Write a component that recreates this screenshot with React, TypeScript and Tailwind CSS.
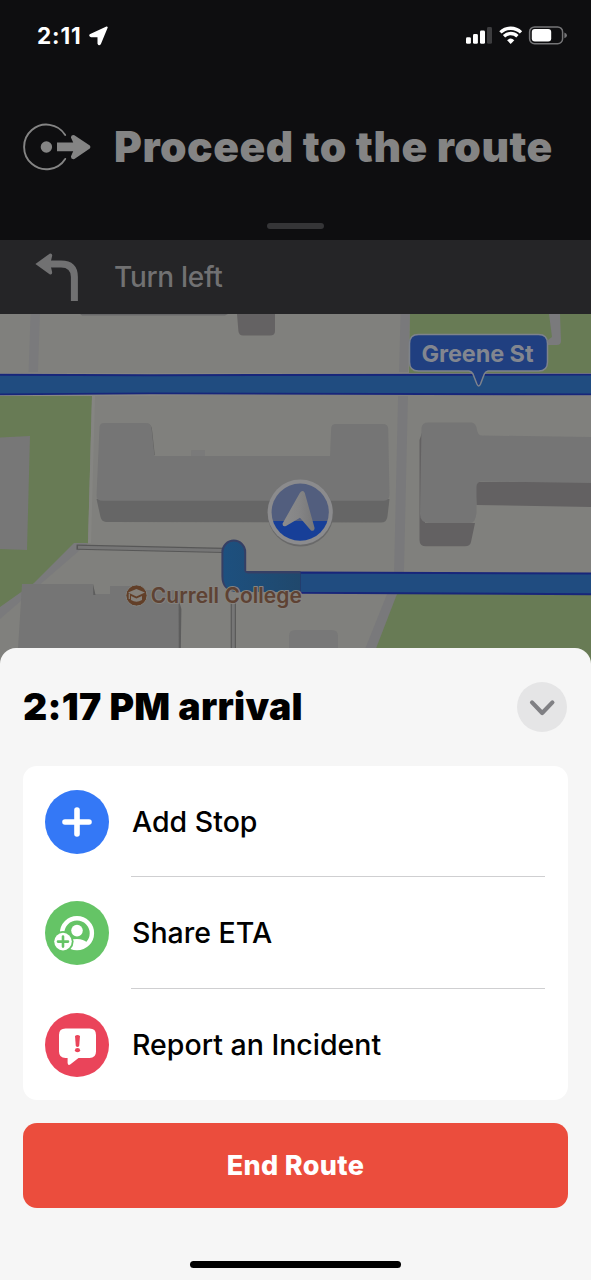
import type { ReactNode } from "react";

function StatusBar() {
  return (
    <div className="flex h-[72px] items-center justify-between pl-[37px] pr-[23px]">
      <div className="flex items-center gap-[6px]">
        <span className="w-[46px] whitespace-nowrap text-[22.5px] font-bold leading-none tracking-[0.9px] text-white">2:11</span>
        <svg width="19" height="20" viewBox="0 0 19 20" fill="#fff" stroke="#fff" strokeWidth="1.8" strokeLinejoin="round">
          <path d="M17.8 1.4 L11 17.8 Q10 19.2 9.4 17.4 V10.4 H2.4 Q0.4 9.8 1.6 8.7Z" />
        </svg>
      </div>
      <svg width="102" height="20" viewBox="0 0 102 20">
        <rect x="0" y="11.2" width="4.9" height="6.6" rx="1.4" fill="#fff" />
        <rect x="7" y="8" width="4.9" height="9.8" rx="1.4" fill="#fff" />
        <rect x="14" y="4.6" width="5" height="13.2" rx="1.4" fill="#fff" />
        <rect x="21" y="1" width="5" height="16.8" rx="1.4" fill="#3d3d3f" />
        <g fill="none" stroke="#fff" strokeWidth="3.3">
          <path d="M34.4 6.4 A14.8 14.8 0 0 1 55 6.4" />
          <path d="M38 10.2 A9.6 9.6 0 0 1 51.4 10.2" />
        </g>
        <path d="M41.1 14.2 A5.4 5.4 0 0 1 48.3 14.2 L44.7 18Z" fill="#fff" />
        <rect x="63.6" y="0.9" width="33" height="16.8" rx="5" fill="none" stroke="#757577" strokeWidth="1.5" />
        <rect x="65.8" y="3" width="19.4" height="12.6" rx="3" fill="#fff" />
        <path d="M98.4 6.4 Q101 7.2 101 9.3 Q101 11.4 98.4 12.2Z" fill="#757577" />
      </svg>
    </div>
  );
}

function ProceedIcon() {
  return (
    <svg width="70" height="50" viewBox="22 122 70 50" className="shrink-0">
      <path d="M65.2 134.9 A22.3 22.3 0 1 0 65.2 158.9" fill="none" stroke="#848484" strokeWidth="1.9" strokeLinecap="round" />
      <circle cx="46.4" cy="147" r="5.7" fill="#848484" />
      <path d="M57 142.6 H73.2 L70.9 137.6 Q71 134.2 74.4 135.2 L89.8 145.6 Q91.2 147 89.8 148.4 L74.4 159 Q71 159.8 70.9 156.6 L73.2 151.3 H57Z" fill="#848484" />
    </svg>
  );
}

function TurnLeftIcon() {
  return (
    <svg width="46" height="50" viewBox="34 252 46 50" className="shrink-0">
      <path d="M48 263.9 H61 Q74.4 263.9 74.4 277 V301" fill="none" stroke="#717172" strokeWidth="7" />
      <path d="M35.4 264.1 L50 253.4 Q52.4 253.2 52.2 255.8 L50.2 263.9 L52.2 272.2 Q52.2 275 49.6 274.2Z" fill="#717172" />
    </svg>
  );
}

function RouteMap() {
  return (
    <svg className="block h-[350px] w-full" viewBox="0 314 591 350" fontFamily="Inter, sans-serif">
      <defs>
        <linearGradient id="past" x1="0" x2="1" y1="0" y2="0">
          <stop offset="0" stopColor="#1d507f" />
          <stop offset="1" stopColor="#20486c" />
        </linearGradient>
        <linearGradient id="needle" x1="0" x2="1" y1="0" y2="0">
          <stop offset="0" stopColor="#8c8c8c" />
          <stop offset="0.5" stopColor="#858586" />
          <stop offset="1" stopColor="#777778" />
        </linearGradient>
        <clipPath id="puck">
          <circle cx="300.2" cy="512.2" r="28.6" />
        </clipPath>
      </defs>
      <rect x="0" y="314" width="591" height="350" fill="#80807d" />

      {/* side streets */}
      <path d="M30.5 314 H40 L38 372 H28.5Z" fill="#7a7a7c" />
      <path d="M80 314 H228 L225 315.4 H82Z" fill="#69696a" />
      <path d="M400.5 314 H410 L408 372 H399Z" fill="#79797b" />
      <path d="M398 396 H408 L404 572 H394Z" fill="#79797b" />
      <path d="M387 594 H397 L375 664 H359Z" fill="#79797b" />

      {/* parks */}
      <path d="M410 314 H591 V373 H409Z" fill="#687b55" />
      <path d="M549 314 H560 L561 341 Q561 345 557 345 H548 V340 L552 337Z" fill="#7a7a7c" />
      <path d="M397 594 H591 V664 H370Z" fill="#687b55" />
      <path d="M0 396 H92 L88 543 L34 584 L0 608Z" fill="#687b55" />
      <path d="M92 396 H95 L91 543 H88Z" fill="#858582" />
      <path d="M0 437.5 L30 436 L27 550 L0 549Z" fill="#777777" />
      <path d="M74 543 H88 L80 550 L0 619 V607 L34 583Z" fill="#7a7a7c" />

      {/* buildings */}
      <path d="M237 314 H275 V331 Q275 335.5 270 335.5 H243 Q239 335.5 238.4 331Z" fill="#646263" />
      <path d="M148 424 Q152 425 152.2 431 L154.8 455 L151 456Z" fill="#616161" />
      <path d="M96.5 499 H389.5 L387.4 517 Q386.5 522.5 381 522.5 L106 522 Q101.5 521.5 100.5 517Z" fill="#666666" />
      <path d="M99.5 427 Q100 423 104 423 H146 Q151 423 151.5 428 L154.5 456 H191.5 V450.5 H205 V456 H330 L331.2 428 Q331.4 424 336 424 H383 Q388 424 388.2 429 L389.5 494 Q389.5 500.7 384 500.7 H103 Q96.5 500.7 96.5 496Z" fill="#757575" />
      <rect x="191.5" y="450.5" width="13.5" height="5.5" fill="#7a7a7a" />
      <path d="M419.5 440 L425 424 V523 H475 L471 542 Q470 546.3 465 546.3 H426 Q419.5 546.3 419.5 540Z" fill="#636162" />
      <path d="M475 482 H591 V507 L476.5 505Z" fill="#636162" />
      <path d="M421.5 428 Q422 422.5 428 422.5 H472 Q476 423 477 430 Q478 435.5 482 435.5 L591 437 V483 L482 481.5 Q476.5 481.5 476.5 487 V513 Q475.5 523 470 523 H430 Q420 523 420 514Z" fill="#757575" />
      <path d="M22 584 H93 L95 594 H110 V586 L130 586 V590 H180 L181 664 H17Z" fill="#757575" />
      <path d="M93 584 L95.5 595 H93.3Z M178.6 600 L181.4 609 L180.6 664 H178.8Z" fill="#5d5d5d" />
      <path d="M289 664 V636 Q289 630 295 630 H332 Q338 630 338 636 V664Z" fill="#787878" />

      {/* footpaths */}
      <path d="M76.5 547.2 L224 550.4 M233.3 603 V664" fill="none" stroke="#575757" strokeWidth="5.2" />
      <path d="M78 547.2 L224 550.4 M233.3 603 V664" fill="none" stroke="#767676" strokeWidth="3" />

      {/* route */}
      <path d="M-4 373.3 L150 373.6 L595 373.2 V395.8 L300 394 L150 395.4 L-4 396Z" fill="#8b8b86" />
      <path d="M-4 374.8 L150 375.2 L595 374.6 V394.4 L150 393.4 L-4 394.4Z" fill="#204c80" stroke="#18267a" strokeWidth="1.9" />
      <path d="M300 572.6 L595 573.6 V594.2 L300 592.8Z" fill="#204c80" stroke="#18267a" strokeWidth="2" />
      <path d="M221.4 552 A12.4 12.4 0 0 1 246.2 552 V571 H300.5 V592 H238 Q221.4 592 221.4 576Z" fill="#353f65" />
      <path d="M223.4 552 A10.4 10.4 0 0 1 244.2 552 V569 Q244.2 573.4 248 573.4 H300.5 V592 H240 Q223.4 592 223.4 576Z" fill="url(#past)" />

      {/* position puck */}
      <circle cx="300.5" cy="513.4" r="33" fill="#696969" />
      <circle cx="300.2" cy="512.2" r="32.6" fill="#8b8b8d" />
      <g clipPath="url(#puck)">
        <rect x="270" y="480" width="62" height="41" fill="#525e7e" />
        <rect x="270" y="521" width="62" height="24" fill="#173f98" />
      </g>
      <path d="M302.6 491 Q304 491.2 304.8 493 L314.6 528 Q314.4 531.6 311 530.6 L300 517.8 L286 526 Q282.2 527.2 282.6 523.4 L299.8 493 Q301 491 302.6 491Z" fill="url(#needle)" />

      {/* street callout */}
      <path d="M418.5 334.5 H538.5 Q547.5 334.5 547.5 343.5 V362 Q547.5 371 538.5 371 H488 Q485.5 371.5 484.3 374 L480.5 384 Q478.7 388 476.9 384 L473 374 Q471.5 371.5 469 371 H418.5 Q409.5 371 409.5 362 V343.5 Q409.5 334.5 418.5 334.5Z" fill="#203f80" stroke="#7e838c" strokeWidth="1.5" />
      <text x="421.5" y="361.8" fontSize="23.5" fontWeight="700" fill="#82868f" textLength="112">Greene St</text>

      {/* place label */}
      <circle cx="136.5" cy="595.5" r="10.6" fill="#623f28" stroke="#80807d" strokeWidth="1" />
      <path d="M128 592.6 L136.4 589 L145 592.6 L136.4 596.4Z M131 596 L136.4 598.4 L142 596 V600 Q136.4 603.6 131 600Z" fill="#85817b" />
      <path d="M129.3 593.5 V599" stroke="#85817b" strokeWidth="1.2" />
      <text x="150.8" y="603" fontSize="21" fontWeight="600" fill="#5e4233" stroke="#85837f" strokeWidth="2" paintOrder="stroke" strokeLinejoin="round" textLength="151">Currell College</text>
    </svg>
  );
}

function AddIcon() {
  return (
    <path d="M32 20 V44 M20 32 H44" stroke="#fff" strokeWidth="5.6" strokeLinecap="round" />
  );
}

function ShareIcon() {
  return (
    <>
      <circle cx="32" cy="32.2" r="14.9" fill="none" stroke="#fff" strokeWidth="4.4" />
      <circle cx="32" cy="29.6" r="5.8" fill="#fff" />
      <path d="M20 43 Q23 38 32 38 Q38.6 38 42 41.5 Q39 48.5 31 48.5Z" fill="#fff" />
      <circle cx="18" cy="40.6" r="10.6" fill="#65c466" />
      <circle cx="18" cy="40.6" r="8.8" fill="#fff" />
      <path d="M18 35.6 V45.6 M13 40.6 H23" stroke="#65c466" strokeWidth="2.6" strokeLinecap="round" />
    </>
  );
}

function IncidentIcon() {
  return (
    <>
      <path d="M20.5 15.6 H44.5 Q51 15.6 51 22 V38.5 Q51 45 44.5 45 H33.5 L25.5 51.3 Q23 53 22.6 50 V45 H20.5 Q14 45 14 38.5 V22 Q14 15.6 20.5 15.6Z" fill="#fff" />
      <path d="M30 23 Q32.5 20.8 35 23 L34.2 33 Q32.5 34.8 30.8 33Z" fill="#ea445a" />
      <ellipse cx="32.5" cy="37.2" rx="2.6" ry="2.1" fill="#ea445a" />
    </>
  );
}

function ActionRow({ tone, label, height, divider, children }: { tone: string; label: string; height: string; divider: boolean; children: ReactNode }) {
  return (
    <li className={`flex items-center gap-[22px] pl-[22px] pr-[23px] ${height}`}>
      <svg width="64" height="64" viewBox="0 0 64 64" fill="none" className="shrink-0">
        <circle cx="32" cy="32" r="32" fill={tone} />
        {children}
      </svg>
      <div className={`flex h-full flex-1 items-center pl-px pt-[2px] ${divider ? "border-b border-[#cfcfd1]" : ""}`}>
        <span className="text-[28.5px] font-medium leading-none tracking-[0px] text-black">{label}</span>
      </div>
    </li>
  );
}

export default function App() {
  return (
    <div className="flex h-[1280px] w-full flex-col overflow-hidden bg-[#0e0e10] font-['Inter',sans-serif]">
      <header className="flex h-[240px] shrink-0 flex-col">
        <StatusBar />
        <div className="flex h-[150px] items-center gap-[22px] pl-[22px]">
          <ProceedIcon />
          <h1 className="whitespace-nowrap text-[42.5px] font-black leading-none tracking-[0.5px] text-[#848484]">Proceed to the route</h1>
        </div>
        <div className="mx-auto mt-px h-[6px] w-[57px] rounded-full bg-[#353537]" />
      </header>
      <div className="flex h-[74px] shrink-0 items-center gap-[34px] bg-[#252527] pl-[34px]">
        <TurnLeftIcon />
        <span className="text-[28px] font-medium leading-none tracking-[-0.3px] text-[#717172]">Turn left</span>
      </div>
      <div className="h-[350px] shrink-0">
        <RouteMap />
      </div>
      <section className="relative -mt-[16px] flex h-[632px] shrink-0 flex-col rounded-t-[16px] bg-[#f6f6f6] px-[23px]">
        <div className="flex h-[118px] items-center justify-between">
          <h2 className="text-[37.5px] font-black leading-none tracking-[0.3px] text-black">2:17 PM arrival</h2>
          <button aria-label="Collapse" className="mr-px flex size-[50px] items-center justify-center rounded-full bg-[#e5e5e6]">
            <svg width="28" height="18" viewBox="0 0 28 18" fill="none" stroke="#808084" strokeWidth="4.2" strokeLinecap="round" strokeLinejoin="round">
              <path d="M4 4.4 L14.2 15 L24.4 4.4" />
            </svg>
          </button>
        </div>
        <ul className="h-[334px] rounded-[14px] bg-white">
          <ActionRow tone="#3478f6" label="Add Stop" height="h-[111px]" divider>
            <AddIcon />
          </ActionRow>
          <ActionRow tone="#65c466" label="Share ETA" height="h-[112px]" divider>
            <ShareIcon />
          </ActionRow>
          <ActionRow tone="#ea445a" label="Report an Incident" height="h-[111px]" divider={false}>
            <IncidentIcon />
          </ActionRow>
        </ul>
        <button className="mt-[23px] h-[85px] rounded-[14px] bg-[#eb4d3d] text-[27px] font-extrabold leading-none text-white">
          <span className="tracking-[0.35px]">End Route</span>
        </button>
        <div className="mx-auto mt-[53px] h-[7px] w-[211px] rounded-full bg-black" />
      </section>
    </div>
  );
}
